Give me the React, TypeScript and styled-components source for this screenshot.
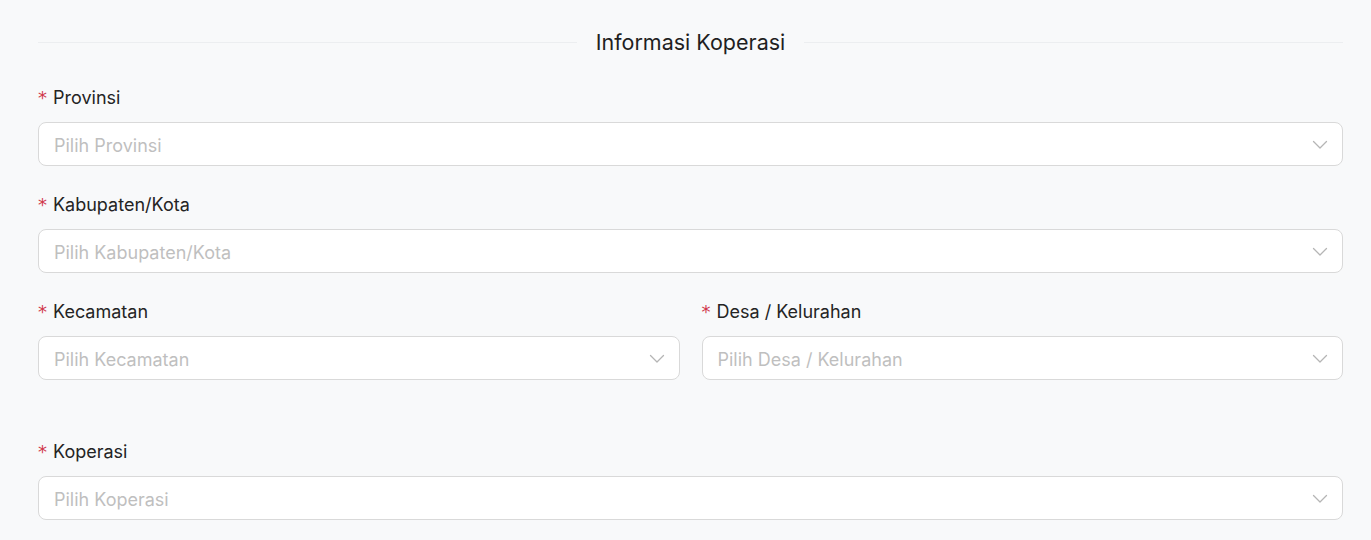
import React from "react";
import styled, { createGlobalStyle } from "styled-components";

const GlobalStyle = createGlobalStyle`
  body {
    margin: 0;
    background: #f8f9fa;
    font-family: Inter, "Noto Sans", sans-serif;
  }
`;

const Page = styled.div`
  padding: 24px 28px 0 38px;
  box-sizing: border-box;
`;

const Divider = styled.div`
  display: flex;
  align-items: center;
  height: 36px;
  margin-bottom: 25px;

  &::before,
  &::after {
    content: "";
    flex: 1;
    height: 1px;
    background: #eceef0;
  }
`;

const DividerTitle = styled.span`
  padding: 0 19px;
  font-size: 21.5px;
  font-weight: 400;
  color: #1f1f1f;
`;

const Row = styled.div<{ $spaced?: boolean }>`
  display: grid;
  grid-template-columns: 1fr 1fr;
  column-gap: 22px;
  margin-top: ${(p) => (p.$spaced ? "33px" : "0")};
`;

const Field = styled.div<{ $full?: boolean }>`
  grid-column: ${(p) => (p.$full ? "1 / -1" : "auto")};
  margin-bottom: 26px;
`;

const Label = styled.label`
  display: flex;
  align-items: center;
  height: 24px;
  margin-bottom: 13px;
  font-size: 18px;
  color: #242424;
`;

const Required = styled.span`
  color: #d0374b;
  font-size: 18px;
  margin-right: 6px;
  font-family: "DejaVu Sans", sans-serif;
`;

const Select = styled.div`
  display: flex;
  align-items: center;
  justify-content: space-between;
  height: 44px;
  box-sizing: border-box;
  padding: 2px 14px 0 15px;
  background: #ffffff;
  border: 1px solid #d9d9d9;
  border-radius: 8px;
  cursor: pointer;
`;

const Placeholder = styled.span`
  font-size: 18px;
  color: #bfbfbf;
`;

const Chevron = () => (
  <svg width="16" height="16" viewBox="0 0 16 16" fill="none">
    <path d="M1.5 4.5 8 11l6.5-6.5" stroke="#b5b5b5" strokeWidth="1.3" strokeLinecap="round" strokeLinejoin="round" />
  </svg>
);

type FieldDef = { label: string; placeholder: string; full?: boolean };

const SelectField = ({ label, placeholder, full }: FieldDef) => (
  <Field $full={full}>
    <Label>
      <Required>*</Required>
      {label}
    </Label>
    <Select>
      <Placeholder>{placeholder}</Placeholder>
      <Chevron />
    </Select>
  </Field>
);

export default function App() {
  return (
    <>
      <GlobalStyle />
      <Page>
        <Divider>
          <DividerTitle>Informasi Koperasi</DividerTitle>
        </Divider>
        <Row>
          <SelectField full label="Provinsi" placeholder="Pilih Provinsi" />
          <SelectField full label="Kabupaten/Kota" placeholder="Pilih Kabupaten/Kota" />
          <SelectField label="Kecamatan" placeholder="Pilih Kecamatan" />
          <SelectField label="Desa / Kelurahan" placeholder="Pilih Desa / Kelurahan" />
        </Row>
        <Row $spaced>
          <SelectField full label="Koperasi" placeholder="Pilih Koperasi" />
        </Row>
      </Page>
    </>
  );
}
